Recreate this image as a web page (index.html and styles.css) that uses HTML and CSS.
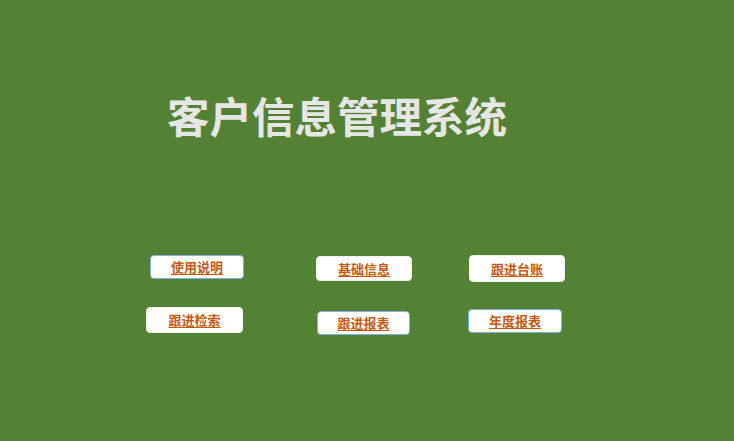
FILE: index.html
```html
<!DOCTYPE html>
<html lang="zh-CN">
<head>
<meta charset="utf-8">
<title>客户信息管理系统</title>
<link rel="stylesheet" href="styles.css">
</head>
<body>
<div class="sheet">
  <h1 class="title">客户信息管理系统</h1>
  <div class="row row-1">
    <a class="btn btn-a blue">使用说明</a>
    <a class="btn btn-b">基础信息</a>
    <a class="btn btn-c">跟进台账</a>
  </div>
  <div class="row row-2">
    <a class="btn btn-d">跟进检索</a>
    <a class="btn btn-e blue">跟进报表</a>
    <a class="btn btn-f blue">年度报表</a>
  </div>
</div>
</body>
</html>
```
FILE: styles.css
```css
html, body {
  margin: 0;
  padding: 0;
}
body {
  background: #548235;
  width: 734px;
  height: 441px;
  overflow: hidden;
  font-family: "Noto Sans CJK SC", "Microsoft YaHei", sans-serif;
}
.sheet {
  display: flex;
  flex-direction: column;
  height: 441px;
}
.title {
  margin: 93px 0 0 167px;
  font-size: 42.5px;
  line-height: 43px;
  font-weight: 700;
  color: #e7e6e6;
  letter-spacing: 0;
}
.row {
  display: flex;
  align-items: flex-start;
  height: 52px;
}
.row-1 { margin-top: 119px; }
.row-2 { margin-top: 0; }
.btn {
  box-sizing: border-box;
  display: flex;
  align-items: center;
  justify-content: center;
  padding-bottom: 1px;
  background: #ffffff;
  border: 1px solid #f2f2f2;
  border-radius: 4px;
  color: #c55a11;
  font-size: 13px;
  font-weight: 700;
  text-decoration: underline;
  text-underline-offset: 2px;
  cursor: pointer;
}
.btn.blue { border-color: #7fb0e0; }
.btn-a { margin: 0 0 0 150px; width: 94px; height: 24px; }
.btn-b { margin: 1px 0 0 72px; width: 96px; height: 25px; }
.btn-c { margin: 0 0 0 57px; width: 96px; height: 27px; }
.btn-d { margin: 0 0 0 146px; width: 97px; height: 26px; }
.btn-e { margin: 4px 0 0 74px; width: 93px; height: 24px; }
.btn-f { margin: 2px 0 0 58px; width: 94px; height: 24px; }
```
